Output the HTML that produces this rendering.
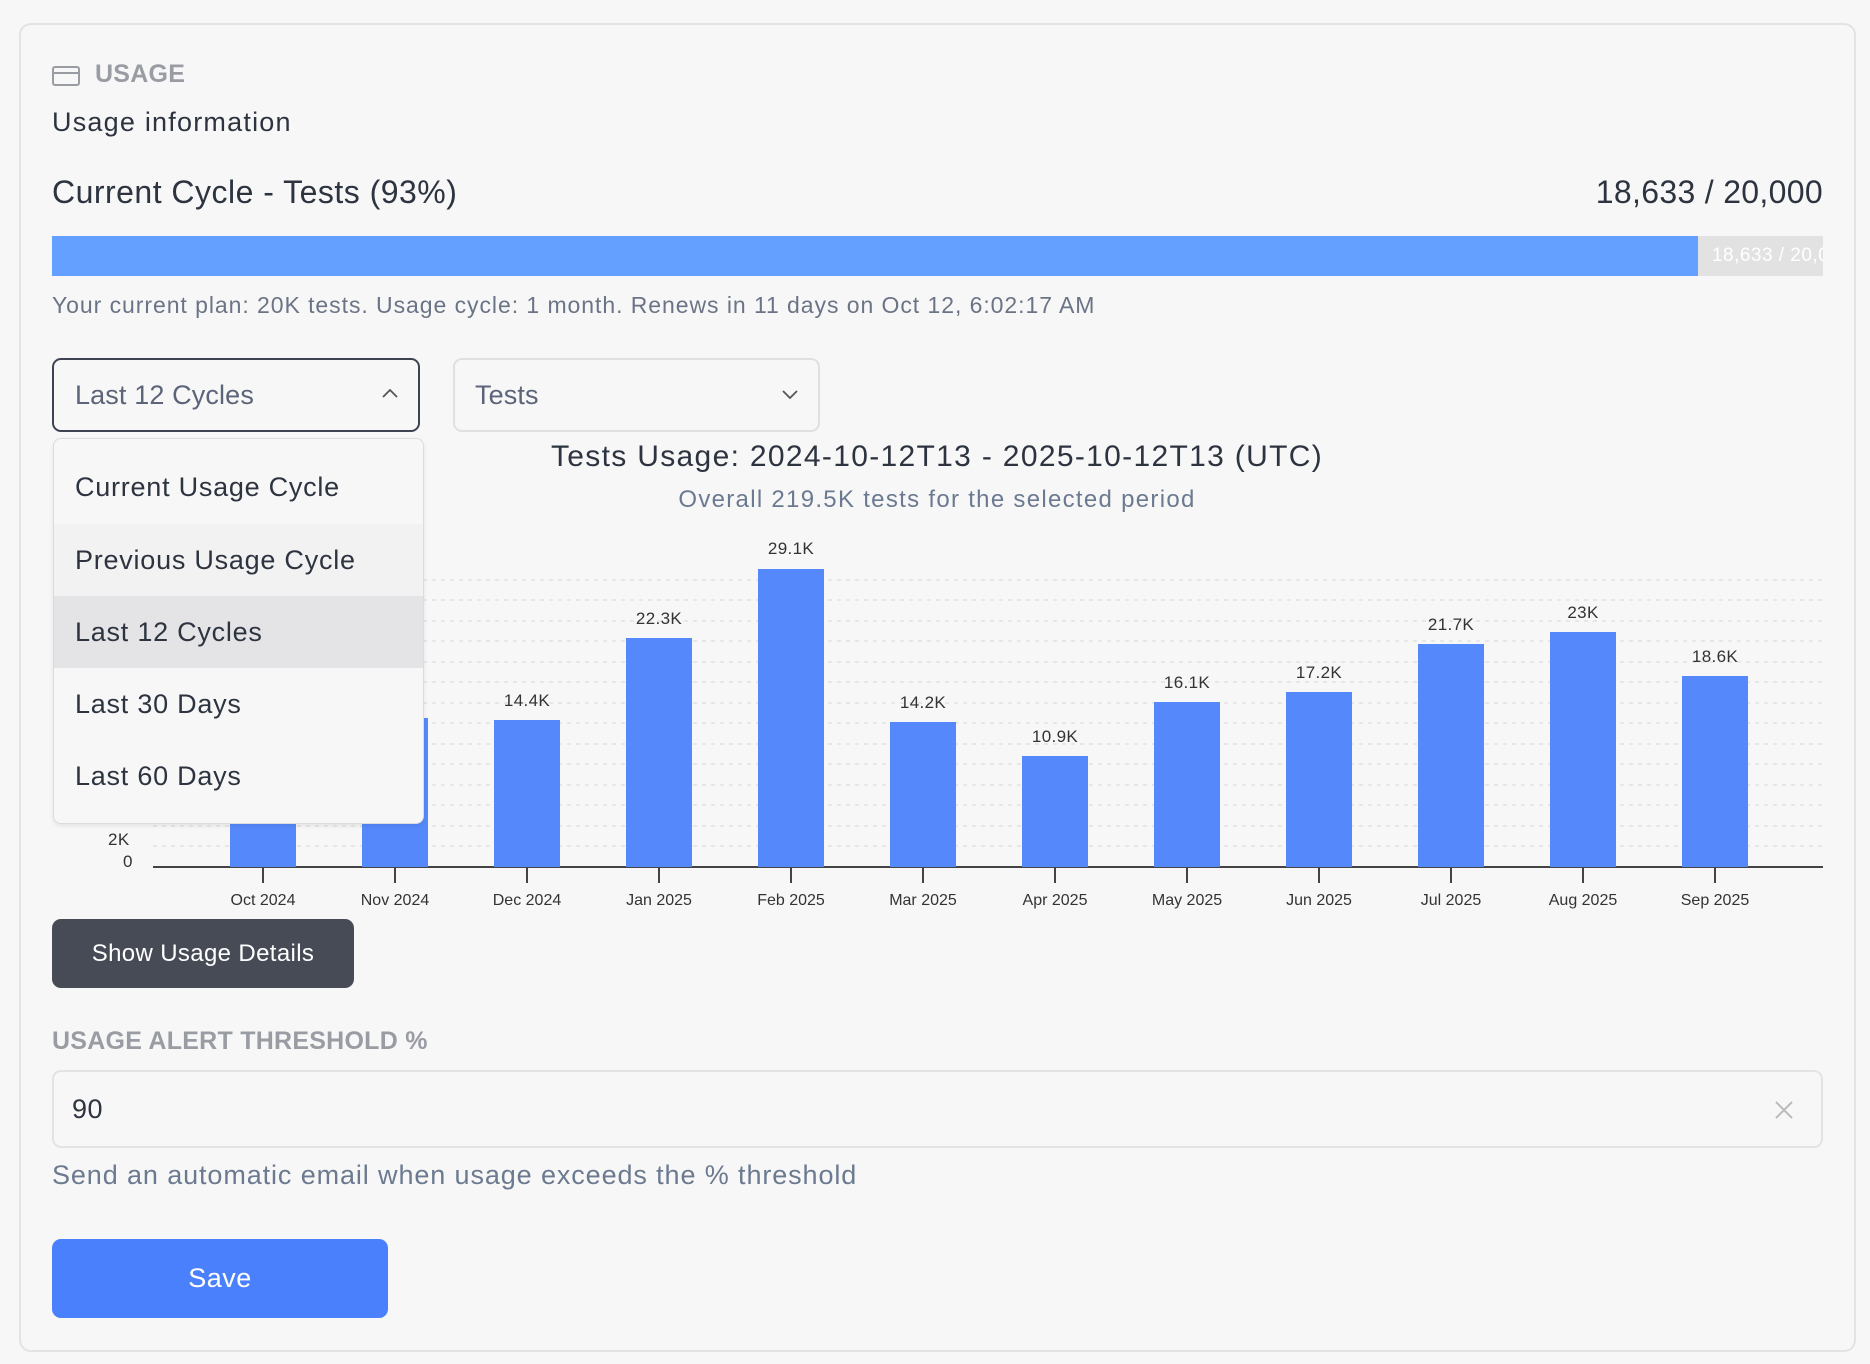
<!DOCTYPE html>
<html><head><meta charset="utf-8"><style>
*{box-sizing:border-box;margin:0;padding:0}
body{width:1870px;height:1364px;background:#f7f7f7;font-family:"Liberation Sans",sans-serif;position:relative;overflow:hidden;color:#2d3440;letter-spacing:0.03em}
.a{position:absolute;white-space:nowrap}
.card{position:absolute;left:19px;top:23px;width:1837px;height:1329px;border:2px solid #e3e3e3;border-radius:12px;background:#f7f7f7}
.sel{position:absolute;top:358px;height:74px;border-radius:9px;background:#f7f7f7}
.item{position:absolute;left:0;width:100%;height:72px;font-size:27px;padding-left:21px;line-height:72px;color:#2d3440;letter-spacing:0.028em}
.bar{position:absolute;width:66px;background:#5589fb}
.bl{position:absolute;font-size:17px;color:#333;transform:translateX(-50%);white-space:nowrap;letter-spacing:0.02em}
.ml{position:absolute;top:892px;font-size:16px;color:#333;transform:translateX(-50%);white-space:nowrap;letter-spacing:0}
.tick{position:absolute;top:867px;width:2px;height:16px;background:#444}
</style></head><body>
<div class="card"></div>
<svg class="a" style="left:52px;top:66px" width="28" height="20" viewBox="0 0 28 20"><rect x="1" y="1" width="26" height="18" rx="2" fill="none" stroke="#9a9ca3" stroke-width="2"/><line x1="1" y1="7" x2="27" y2="7" stroke="#9a9ca3" stroke-width="2"/></svg>
<div class="a" style="left:95px;top:60px;font-size:25px;font-weight:bold;color:#9a9ca3;letter-spacing:0.01em">USAGE</div>
<div class="a" style="left:52px;top:107px;font-size:27px;color:#2d3440;letter-spacing:0.045em">Usage information</div>
<div class="a" style="left:52px;top:174px;font-size:32px;color:#2d3440">Current Cycle - Tests (93%)</div>
<div class="a" style="right:47px;top:174px;font-size:32px;color:#2d3440;letter-spacing:0.01em">18,633 / 20,000</div>
<div class="a" style="left:52px;top:236px;width:1771px;height:40px;background:#e2e2e2;overflow:hidden">
<div style="position:absolute;left:0;top:0;width:1646px;height:40px;background:#64a0ff"></div>
<div style="position:absolute;left:1660px;top:9px;font-size:19px;color:#fff;white-space:nowrap">18,633 / 20,000</div></div>
<div class="a" style="left:52px;top:292px;font-size:23px;color:#6b7486;letter-spacing:0.041em">Your current plan: 20K tests. Usage cycle: 1 month. Renews in 11 days on Oct 12, 6:02:17 AM</div>
<div class="sel" style="left:52px;width:368px;border:2px solid #3d4350"></div>
<div class="a" style="left:75px;top:380px;font-size:27px;color:#5b6478;letter-spacing:0.005em">Last 12 Cycles</div>
<svg class="a" style="left:381px;top:387px" width="18" height="12"><polyline points="2,10 9,3 16,10" fill="none" stroke="#555" stroke-width="1.8"/></svg>
<div class="sel" style="left:453px;width:367px;border:2px solid #e0e0e0"></div>
<div class="a" style="left:475px;top:380px;font-size:27px;color:#5b6478;letter-spacing:0.005em">Tests</div>
<svg class="a" style="left:781px;top:389px" width="18" height="12"><polyline points="2,2 9,9 16,2" fill="none" stroke="#555" stroke-width="1.8"/></svg>
<div class="a" style="left:937px;top:440px;transform:translateX(-50%);font-size:30px;color:#2d3440;letter-spacing:0.044em">Tests Usage: 2024-10-12T13 - 2025-10-12T13 (UTC)</div>
<div class="a" style="left:937px;top:486px;transform:translateX(-50%);font-size:24px;color:#6b7a90;letter-spacing:0.054em">Overall 219.5K tests for the selected period</div>
<svg class="a" style="left:0;top:0" width="1870" height="1364">
<g stroke="#e2e2e2" stroke-width="1.5" stroke-dasharray="4,5">
<line x1="153" y1="846" x2="1823" y2="846"/><line x1="153" y1="826" x2="1823" y2="826"/><line x1="153" y1="805" x2="1823" y2="805"/><line x1="153" y1="785" x2="1823" y2="785"/><line x1="153" y1="764" x2="1823" y2="764"/><line x1="153" y1="744" x2="1823" y2="744"/><line x1="153" y1="723" x2="1823" y2="723"/><line x1="153" y1="703" x2="1823" y2="703"/><line x1="153" y1="682" x2="1823" y2="682"/><line x1="153" y1="662" x2="1823" y2="662"/><line x1="153" y1="641" x2="1823" y2="641"/><line x1="153" y1="621" x2="1823" y2="621"/><line x1="153" y1="600" x2="1823" y2="600"/><line x1="153" y1="580" x2="1823" y2="580"/>
</g>
<line x1="153" y1="867" x2="1823" y2="867" stroke="#444" stroke-width="2"/>
</svg>
<div class="a" style="left:108px;top:830px;font-size:17px;color:#333">2K</div>
<div class="a" style="left:123px;top:852px;font-size:17px;color:#333">0</div>
<div class="bar" style="left:230px;top:691px;height:176px"></div>
<div class="bar" style="left:362px;top:718px;height:149px"></div>
<div class="bar" style="left:494px;top:720px;height:147px"></div><div class="bl" style="left:527px;top:691px">14.4K</div>
<div class="bar" style="left:626px;top:638px;height:229px"></div><div class="bl" style="left:659px;top:609px">22.3K</div>
<div class="bar" style="left:758px;top:569px;height:298px"></div><div class="bl" style="left:791px;top:539px">29.1K</div>
<div class="bar" style="left:890px;top:722px;height:145px"></div><div class="bl" style="left:923px;top:693px">14.2K</div>
<div class="bar" style="left:1022px;top:756px;height:111px"></div><div class="bl" style="left:1055px;top:727px">10.9K</div>
<div class="bar" style="left:1154px;top:702px;height:165px"></div><div class="bl" style="left:1187px;top:673px">16.1K</div>
<div class="bar" style="left:1286px;top:692px;height:175px"></div><div class="bl" style="left:1319px;top:663px">17.2K</div>
<div class="bar" style="left:1418px;top:644px;height:223px"></div><div class="bl" style="left:1451px;top:615px">21.7K</div>
<div class="bar" style="left:1550px;top:632px;height:235px"></div><div class="bl" style="left:1583px;top:603px">23K</div>
<div class="bar" style="left:1682px;top:676px;height:191px"></div><div class="bl" style="left:1715px;top:647px">18.6K</div>
<div class="tick" style="left:262px"></div><div class="ml" style="left:263px">Oct 2024</div>
<div class="tick" style="left:394px"></div><div class="ml" style="left:395px">Nov 2024</div>
<div class="tick" style="left:526px"></div><div class="ml" style="left:527px">Dec 2024</div>
<div class="tick" style="left:658px"></div><div class="ml" style="left:659px">Jan 2025</div>
<div class="tick" style="left:790px"></div><div class="ml" style="left:791px">Feb 2025</div>
<div class="tick" style="left:922px"></div><div class="ml" style="left:923px">Mar 2025</div>
<div class="tick" style="left:1054px"></div><div class="ml" style="left:1055px">Apr 2025</div>
<div class="tick" style="left:1186px"></div><div class="ml" style="left:1187px">May 2025</div>
<div class="tick" style="left:1318px"></div><div class="ml" style="left:1319px">Jun 2025</div>
<div class="tick" style="left:1450px"></div><div class="ml" style="left:1451px">Jul 2025</div>
<div class="tick" style="left:1582px"></div><div class="ml" style="left:1583px">Aug 2025</div>
<div class="tick" style="left:1714px"></div><div class="ml" style="left:1715px">Sep 2025</div>
<div class="a" style="left:53px;top:438px;width:371px;height:386px;background:#f7f7f7;border:1.5px solid #dcdcdc;border-radius:8px;overflow:hidden;box-shadow:0 2px 4px rgba(0,0,0,.08)">
<div class="item" style="top:12px">Current Usage Cycle</div>
<div class="item" style="top:85px;background:#f2f2f2">Previous Usage Cycle</div>
<div class="item" style="top:157px;background:#e4e4e6">Last 12 Cycles</div>
<div class="item" style="top:229px">Last 30 Days</div>
<div class="item" style="top:301px">Last 60 Days</div>
</div>
<div class="a" style="left:52px;top:919px;width:302px;height:69px;background:#464b55;border-radius:9px;color:#fff;font-size:24px;text-align:center;line-height:69px;letter-spacing:0.015em">Show Usage Details</div>
<div class="a" style="left:52px;top:1027px;font-size:25px;font-weight:bold;color:#9a9ca3;letter-spacing:0.01em">USAGE ALERT THRESHOLD %</div>
<div class="a" style="left:52px;top:1070px;width:1771px;height:78px;border:2px solid #e3e3e3;border-radius:9px"></div>
<div class="a" style="left:72px;top:1094px;font-size:27px;color:#2d3440">90</div>
<svg class="a" style="left:1774px;top:1100px" width="20" height="20"><path d="M2 2L18 18M18 2L2 18" stroke="#bbb" stroke-width="2"/></svg>
<div class="a" style="left:52px;top:1160px;font-size:27px;color:#6b7a90;letter-spacing:0.033em">Send an automatic email when usage exceeds the % threshold</div>
<div class="a" style="left:52px;top:1239px;width:336px;height:79px;background:#4a80fb;border-radius:9px;color:#fff;font-size:27px;text-align:center;line-height:79px">Save</div>
</body></html>
